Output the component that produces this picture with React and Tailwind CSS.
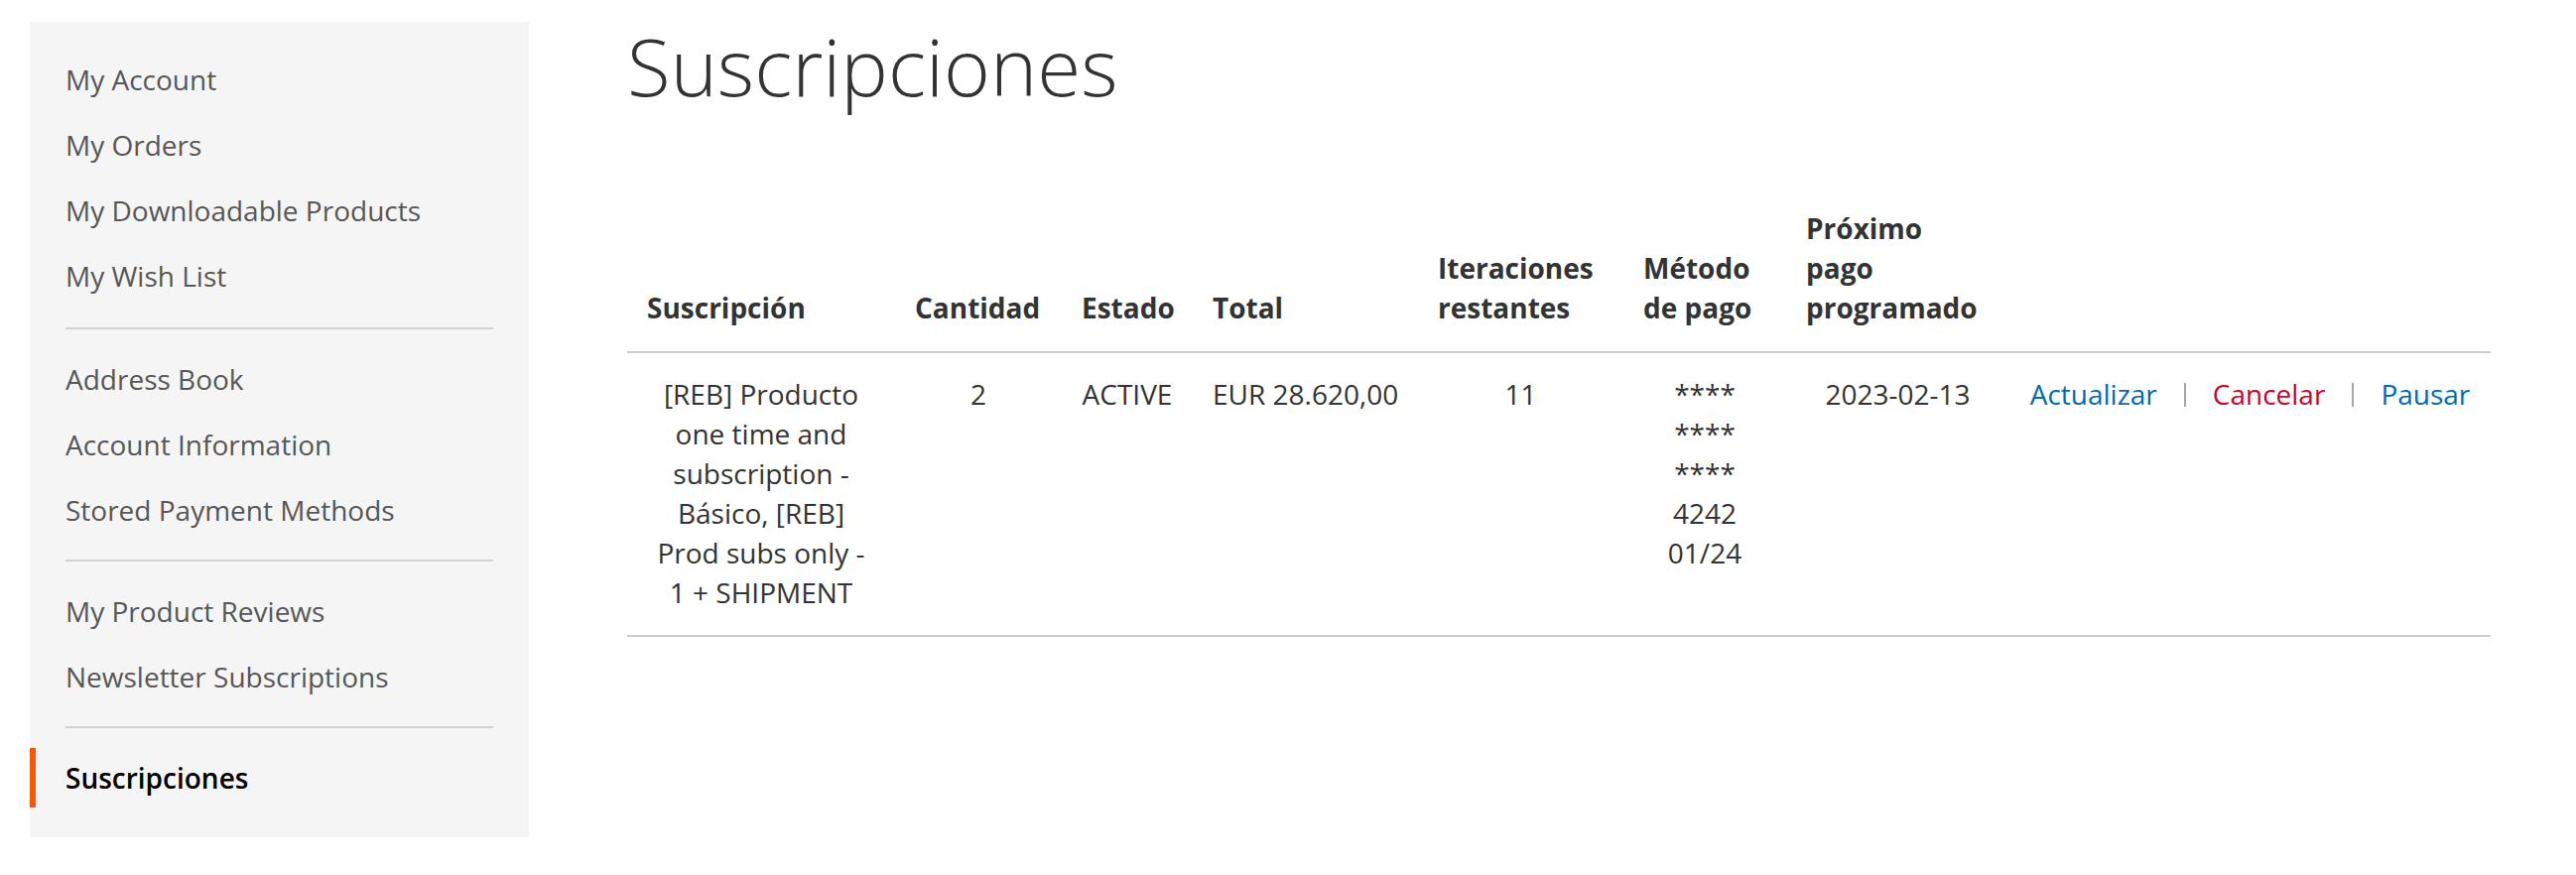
import React from "react"

// sidebar links, null = delimiter
const NAV = [
  "My Account",
  "My Orders",
  "My Downloadable Products",
  "My Wish List",
  null,
  "Address Book",
  "Account Information",
  "Stored Payment Methods",
  null,
  "My Product Reviews",
  "Newsletter Subscriptions",
  null,
]

function Sidebar() {
  return (
    <div className="w-[503px] mt-[22px] bg-[#f5f5f5] pt-[28px] pb-[30px] flex flex-col shrink-0">
      {NAV.map((item, i) =>
        item === null ? (
          <div
            key={i}
            className={
              "mx-[36px] mb-[14px] h-[2px] bg-[#d1d1d1] " +
              (i === 4 ? "mt-[22px]" : "mt-[20px]")
            }
          />
        ) : (
          <a
            key={i}
            href="#"
            className={
              "block py-[10px] pl-[36px] leading-[40px] text-[28px] text-[#575757] " +
              (i === 0 ? "" : "mt-[6px]")
            }
          >
            {item}
          </a>
        )
      )}

      {/* ACTUAL */}
      <strong className="block mt-[6px] py-[10px] pl-[30px] border-l-[6px] border-[#ff5501] leading-[40px] text-[28px] font-semibold text-black">
        Suscripciones
      </strong>
    </div>
  )
}

function Th({ children }) {
  return (
    <th className="align-bottom text-left font-bold pt-[16px] pb-[24px] px-[20px]">
      {children}
    </th>
  )
}

function Td({ children }) {
  return (
    <td className="align-top text-center pt-[21px] pb-[23px] px-[20px]">
      {children}
    </td>
  )
}

function Sep() {
  return (
    <span className="inline-block w-[2px] h-[24px] bg-[#a6a6a6] mx-[27px] align-[-2px]" />
  )
}

export default function App() {
  return (
    <div
      className="flex items-start pl-[30px] bg-white min-h-[882px] text-[#333]"
      style={{ fontFamily: '"Open Sans", "Noto Sans", sans-serif' }}
    >
      <Sidebar />

      <main className="ml-[99px] w-[1878px] shrink-0">
        <h1 className="mt-[22px] text-[80px] leading-[88px] font-light text-[#333]">
          Suscripciones
        </h1>

        <table className="mt-[84px] w-[1878px] table-fixed border-collapse text-[28px] leading-[40px]">
          <colgroup>
            <col className="w-[270px]" />
            <col className="w-[168px]" />
            <col className="w-[132px]" />
            <col className="w-[227px]" />
            <col className="w-[207px]" />
            <col className="w-[164px]" />
            <col className="w-[225px]" />
            <col className="w-[485px]" />
          </colgroup>

          <thead>
            <tr className="border-b-2 border-[#ccc]">
              <Th>Suscripción</Th>
              <Th>Cantidad</Th>
              <Th>Estado</Th>
              <Th>Total</Th>
              <Th>
                Iteraciones
                <br />
                restantes
              </Th>
              <Th>
                Método
                <br />
                de pago
              </Th>
              <Th>
                Próximo
                <br />
                pago
                <br />
                programado
              </Th>
              <Th />
            </tr>
          </thead>

          <tbody>
            <tr className="border-b-2 border-[#ccc]">
              <Td>
                [REB] Producto
                <br />
                one time and
                <br />
                subscription -
                <br />
                Básico, [REB]
                <br />
                Prod subs only -
                <br />1 + SHIPMENT
              </Td>
              <Td>2</Td>
              <Td>ACTIVE</Td>
              <Td>
                <span className="whitespace-nowrap">EUR 28.620,00</span>
              </Td>
              <Td>11</Td>
              <Td>
                ****
                <br />
                ****
                <br />
                ****
                <br />
                4242
                <br />
                01/24
              </Td>
              <Td>2023-02-13</Td>
              <Td>
                <span className="whitespace-nowrap">
                  <a href="#" className="text-[#006bb4]">
                    Actualizar
                  </a>
                  <Sep />
                  <a href="#" className="text-[#d10029]">
                    Cancelar
                  </a>
                  <Sep />
                  <a href="#" className="text-[#006bb4]">
                    Pausar
                  </a>
                </span>
              </Td>
            </tr>
          </tbody>
        </table>
      </main>
    </div>
  )
}
